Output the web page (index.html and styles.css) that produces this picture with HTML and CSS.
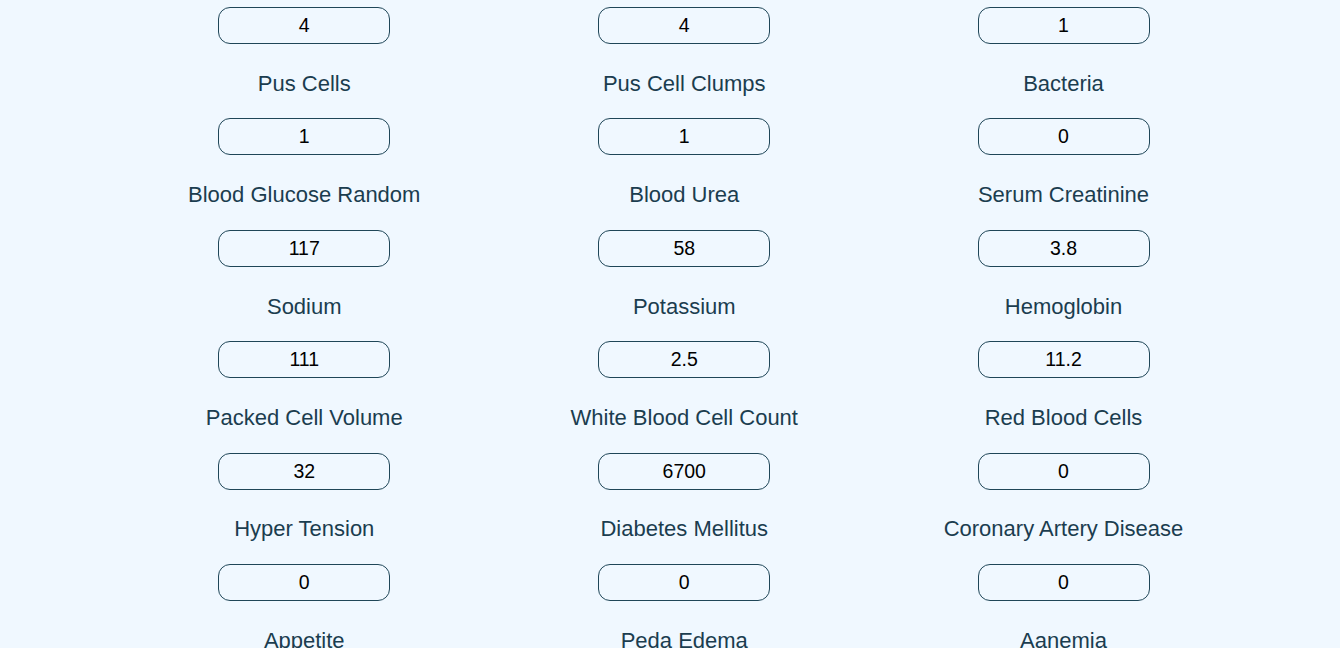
FILE: index.html
```html
<!DOCTYPE html>
<html lang="en">
<head>
<meta charset="utf-8">
<title>Kidney Disease Form</title>
<link rel="stylesheet" href="styles.css">
</head>
<body>
<form class="form">
  <input class="val" type="text" value="4">
  <input class="val" type="text" value="4">
  <input class="val" type="text" value="1">

  <label class="lbl">Pus Cells</label>
  <label class="lbl">Pus Cell Clumps</label>
  <label class="lbl">Bacteria</label>
  <input class="val" type="text" value="1">
  <input class="val" type="text" value="1">
  <input class="val" type="text" value="0">

  <label class="lbl">Blood Glucose Random</label>
  <label class="lbl">Blood Urea</label>
  <label class="lbl">Serum Creatinine</label>
  <input class="val" type="text" value="117">
  <input class="val" type="text" value="58">
  <input class="val" type="text" value="3.8">

  <label class="lbl">Sodium</label>
  <label class="lbl">Potassium</label>
  <label class="lbl">Hemoglobin</label>
  <input class="val" type="text" value="111">
  <input class="val" type="text" value="2.5">
  <input class="val" type="text" value="11.2">

  <label class="lbl">Packed Cell Volume</label>
  <label class="lbl">White Blood Cell Count</label>
  <label class="lbl">Red Blood Cells</label>
  <input class="val" type="text" value="32">
  <input class="val" type="text" value="6700">
  <input class="val" type="text" value="0">

  <label class="lbl">Hyper Tension</label>
  <label class="lbl">Diabetes Mellitus</label>
  <label class="lbl">Coronary Artery Disease</label>
  <input class="val" type="text" value="0">
  <input class="val" type="text" value="0">
  <input class="val" type="text" value="0">

  <label class="lbl">Appetite</label>
  <label class="lbl">Peda Edema</label>
  <label class="lbl">Aanemia</label>
  <input class="val" type="text" value="0">
  <input class="val" type="text" value="0">
  <input class="val" type="text" value="0">
</form>
</body>
</html>
```
FILE: styles.css
```css
html, body {
  margin: 0;
  padding: 0;
  background: #f0f8ff;
  overflow: hidden;
}

body {
  font-family: "Liberation Sans", Arial, sans-serif;
}

.form {
  display: grid;
  grid-template-columns: 380.5px 379.5px 379px;
  justify-items: center;
  padding: 7px 0 0 114px;
}

.val {
  box-sizing: border-box;
  width: 172px;
  height: 37px;
  margin: 0 0 26.8px;
  padding: 0 8px;
  border: 1px solid #1f4658;
  border-radius: 12px;
  background: transparent;
  font-family: "Liberation Sans", Arial, sans-serif;
  font-size: 19.5px;
  color: #000;
  text-align: center;
  outline: none;
}

.lbl {
  display: block;
  height: 26px;
  line-height: 26px;
  margin: 0 0 21.6px;
  font-size: 22px;
  color: #1b3d4f;
  white-space: nowrap;
}
```
